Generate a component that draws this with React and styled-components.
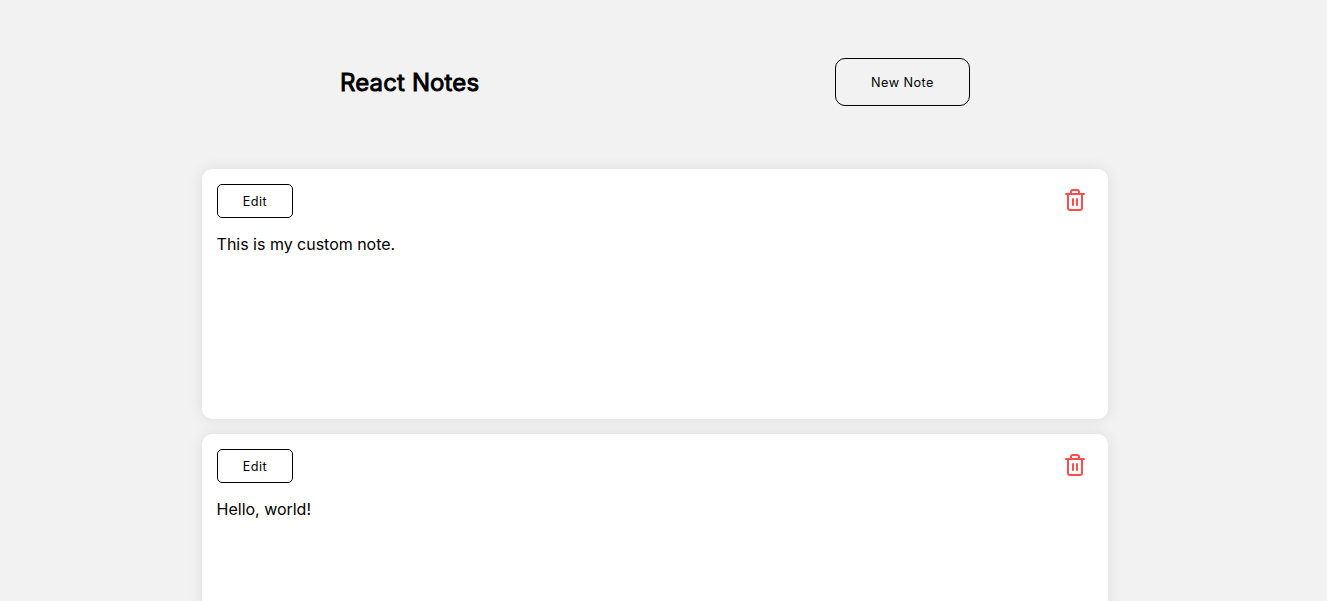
import React from "react";
import styled, { createGlobalStyle } from "styled-components";
import { FiTrash2 } from "react-icons/fi";

const GlobalStyle = createGlobalStyle`
  * { box-sizing: border-box; }
  body {
    margin: 0;
    height: 100vh;
    overflow: hidden;
    background: #f2f2f2;
    color: #000;
    font-family: Inter, sans-serif;
  }
`;
const Page = styled.main`
  width: 906px;
  margin-left: 202px;
`;
const Header = styled.header`
  display: flex;
  align-items: center;
  justify-content: space-between;
  height: 169px;
  padding: 0 138px 5px;
`;
const Title = styled.h1`
  margin: 1px 0 0;
  font-size: 24px;
  font-weight: 400;
  line-height: 30px;
  letter-spacing: 0.13px;
  -webkit-text-stroke: 0.9px #000;
`;
const Button = styled.button`
  padding: 2px 0 0;
  border: 1px solid #000;
  background: transparent;
  color: #000;
  font-family: inherit;
  font-size: 12.7px;
  line-height: 16px;
  letter-spacing: 0.45px;
`;
const NewButton = styled(Button)`
  width: 135px;
  height: 48px;
  border-radius: 10px;
`;
const EditButton = styled(Button)`
  width: 76px;
  height: 34px;
  border-radius: 5px;
`;
const Notes = styled.section`
  display: flex;
  flex-direction: column;
  gap: 15px;
`;
const Note = styled.article`
  height: 250px;
  padding: 15px;
  border-radius: 10px;
  background: #fff;
  box-shadow: 0 0 15px rgba(0, 0, 0, 0.09);
`;
const Toolbar = styled.div`
  display: flex;
  align-items: center;
  justify-content: space-between;
  height: 34px;
  padding-right: 6px;
`;
const Trash = styled(FiTrash2)`
  width: 24px;
  height: 24px;
  margin-bottom: 2px;
  color: #ff4d4d;
`;
const Text = styled.p`
  margin: 16px 0 0 -0.4px;
  font-size: 16px;
  line-height: 20px;
  letter-spacing: -0.02px;
`;

const notes = ["This is my custom note.", "Hello, world!"];

export default function App() {
  return (
    <>
      <GlobalStyle />
      <Page>
        <Header>
          <Title>React Notes</Title>
          <NewButton>New Note</NewButton>
        </Header>
        <Notes>
          {notes.map((text) => (
            <Note key={text}>
              <Toolbar>
                <EditButton>Edit</EditButton>
                <Trash aria-label="Delete" />
              </Toolbar>
              <Text>{text}</Text>
            </Note>
          ))}
        </Notes>
      </Page>
    </>
  );
}
